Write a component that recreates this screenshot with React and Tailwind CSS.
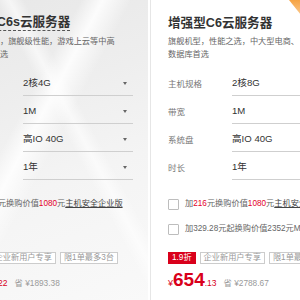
import { useState } from "react";

const cards = [
  {
    title: "计算型C6s云服务器",
    dashed: true,
    desc: ["高性能计算，旗舰级性能，游戏上云等中高", "负载业务首选"],
    rows: [
      ["主机规格", "2核4G"],
      ["带宽", "1M"],
      ["系统盘", "高IO 40G"],
      ["时长", "1年"],
    ],
    addons: 1,
    discount: "2.2折",
    price: "896",
    cents: ".22",
    save: "¥1893.38",
    shaded: true,
  },
  {
    title: "增强型C6云服务器",
    dashed: false,
    desc: ["旗舰机型，性能之选，中大型电商、", "数据库首选"],
    rows: [
      ["主机规格", "2核8G"],
      ["带宽", "1M"],
      ["系统盘", "高IO 40G"],
      ["时长", "1年"],
    ],
    addons: 2,
    discount: "1.9折",
    price: "654",
    cents: ".13",
    save: "¥2788.67",
    shaded: false,
    corner: true,
  },
];

function Checkbox({ checked, onClick }) {
  return (
    <button
      onClick={onClick}
      className="w-[11px] h-[11px] border border-[#bdbdbd] bg-white rounded-[1px] shrink-0 flex items-center justify-center"
    >
      {checked && <span className="w-[5px] h-[5px] bg-[#d9001b]" />}
    </button>
  );
}

function Card({ card }) {
  const [checks, setChecks] = useState([false, false]);

  const toggle = (i) => {
    const next = [...checks];
    next[i] = !next[i];
    setChecks(next);
  };

  return (
    <div
      className={
        "relative w-[206px] h-[300px] shrink-0 pl-[17px] pr-[15px] pt-[15px] " +
        (card.shaded
          ? "bg-[linear-gradient(118deg,transparent_38%,rgba(255,255,255,0.85)_44%,transparent_52%),linear-gradient(62deg,transparent_58%,rgba(255,255,255,0.6)_62%,transparent_66%),linear-gradient(160deg,#e7e7e7_0%,#eeeeee_35%,#f4f4f4_60%,#f9f9f9_100%)]"
          : "bg-white border-l border-[#e6e6e6]")
      }
    >
      {card.corner && (
        <svg
          className="absolute left-[138px] top-0"
          width="12"
          height="15"
          viewBox="0 0 12 15"
        >
          <defs>
            <linearGradient id="cornerFill" x1="0" y1="0" x2="0" y2="1">
              <stop offset="0" stopColor="#f6a343" />
              <stop offset="1" stopColor="#fbc98c" />
            </linearGradient>
          </defs>
          <polygon points="0,0 12,0 12,15" fill="url(#cornerFill)" />
        </svg>
      )}

      <div className="h-[16px] flex items-center">
        <span
          className={
            "text-[12.6px] leading-[15px] font-bold text-[#333] whitespace-nowrap " +
            (card.dashed ? "border-b border-dashed border-[#555]" : "")
          }
        >
          {card.title}
        </span>
      </div>

      <p className="mt-[3.5px] text-[8.2px] leading-[13px] text-[#666] whitespace-nowrap">
        {card.desc[0]}
        <br />
        {card.desc[1]}
      </p>

      <div className="mt-[11.5px] flex flex-col gap-[4px]">
        {card.rows.map(([label, value]) => (
          <div key={label} className="flex h-[24px]">
            <span className="w-[64px] shrink-0 flex items-center text-[8.5px] text-[#777] whitespace-nowrap">
              {label}
            </span>
            <div className="flex-1 flex items-center justify-between border-b border-[#cfcfcf] pr-[6px]">
              <span className="text-[9.6px] text-[#333] whitespace-nowrap">
                {value}
              </span>
              <span className="w-0 h-0 border-l-[2.5px] border-r-[2.5px] border-t-[3px] border-l-transparent border-r-transparent border-t-[#666]" />
            </div>
          </div>
        ))}
      </div>

      <div className="mt-[14px] flex flex-col gap-[5px]">
        <div className="flex items-center gap-[6px] h-[20px] whitespace-nowrap text-[8.2px] text-[#666]">
          <Checkbox checked={checks[0]} onClick={() => toggle(0)} />
          <span>
            加<span className="text-[#e4002b]">216</span>元换购价值
            <span className="text-[#e4002b]">1080</span>元
            <span className="underline text-[#444]">主机安全企业版</span>
          </span>
        </div>
        {card.addons > 1 && (
          <div className="flex items-center gap-[6px] h-[20px] whitespace-nowrap text-[8.2px] text-[#666]">
            <Checkbox checked={checks[1]} onClick={() => toggle(1)} />
            <span>加329.28元起换购价值2352元MySQL数据库</span>
          </div>
        )}
      </div>

      <div
        className={
          "flex items-center gap-[4px] whitespace-nowrap text-[8.2px] " +
          (card.addons > 1 ? "mt-[13px]" : "mt-[38px]")
        }
      >
        <span className="h-[12px] px-[3px] flex items-center bg-[#d9001b] text-white border border-[#d9001b]">
          {card.discount}
        </span>
        <span className="h-[12px] px-[3px] flex items-center border border-[#cccccc] text-[#999] bg-white">
          企业新用户专享
        </span>
        <span className="h-[12px] px-[3px] flex items-center border border-[#cccccc] text-[#999] bg-white">
          限1单最多3台
        </span>
      </div>

      <div className="mt-[5px] flex items-baseline whitespace-nowrap text-[#d9001b] leading-[22px]">
        <span className="text-[9px]">¥</span>
        <span className="text-[19px] font-bold">{card.price}</span>
        <span className="text-[8.5px]">{card.cents}</span>
        <span className="ml-[7px] text-[8.3px] text-[#9a9a9a]">
          省 {card.save}
        </span>
      </div>
    </div>
  );
}

export default function App() {
  return (
    <div className="w-[300px] h-[300px] overflow-hidden bg-white font-['Liberation_Sans','Noto_Sans_CJK_SC',sans-serif]">
      <div className="flex gap-[2px] ml-[-58px] w-max">
        {cards.map((card) => (
          <Card key={card.title} card={card} />
        ))}
      </div>
    </div>
  );
}
